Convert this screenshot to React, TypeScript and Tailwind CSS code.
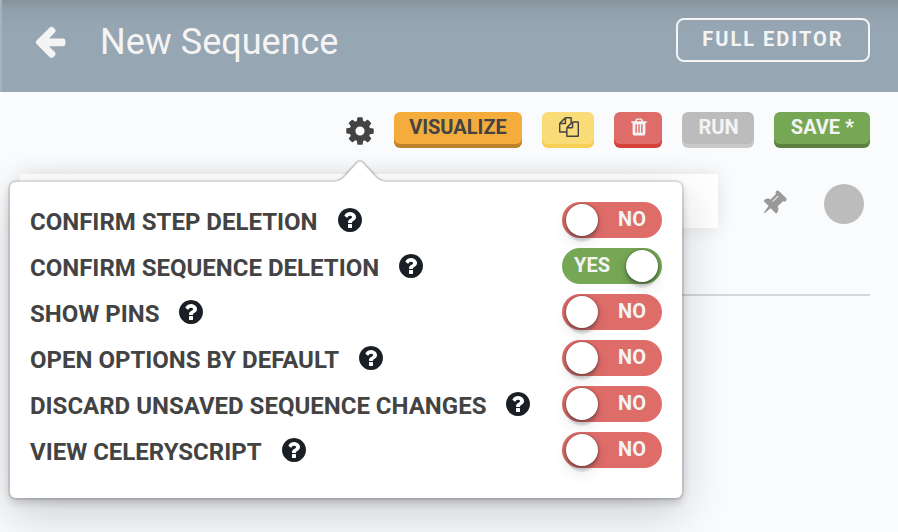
import type { ReactNode } from "react";

const paths = {
  back: "M1664 896v128q0 53-32.5 90.5t-84.5 37.5h-704l293 294q38 36 38 90t-38 90l-75 76q-37 37-90 37-52 0-91-37l-651-652q-37-37-37-90 0-52 37-91l651-650q38-38 91-38 52 0 90 38l75 74q38 38 38 91t-38 91l-293 293h704q52 0 84.5 37.5t32.5 90.5z",
  cog: "M1152 896q0-106-75-181t-181-75-181 75-75 181 75 181 181 75 181-75 75-181zm512-109v222q0 12-8 23t-20 13l-185 28q-19 54-39 91 35 50 107 138 10 12 10 25t-9 23q-27 37-99 108t-94 71q-12 0-26-9l-138-108q-44 23-91 38-16 136-29 186-7 28-36 28h-222q-14 0-24.5-8.5t-11.5-21.5l-28-184q-49-16-90-37l-141 107q-10 9-25 9-14 0-25-11-126-114-165-168-7-10-7-23 0-12 8-23 15-21 51-66.5t54-70.5q-27-50-41-99l-183-27q-13-2-21-12.5t-8-23.5v-222q0-12 8-23t19-13l186-28q14-46 39-92-40-57-107-138-10-12-10-24 0-10 9-23 26-36 98.5-107.5t94.5-71.5q13 0 26 10l138 107q44-23 91-38 16-136 29-186 7-28 36-28h222q14 0 24.5 8.5t11.5 21.5l28 184q49 16 90 37l142-107q9-9 24-9 13 0 25 10 129 119 165 170 7 8 7 22 0 12-8 23-15 21-51 66.5t-54 70.5q26 50 41 98l183 28q13 2 21 12.5t8 23.5z",
  help: "M1024 1376v-192q0-14-9-23t-23-9h-192q-14 0-23 9t-9 23v192q0 14 9 23t23 9h192q14 0 23-9t9-23zm256-672q0-88-55.5-163t-138.5-116-170-41q-243 0-371 213-15 24 8 42l132 100q7 6 19 6 16 0 25-12 53-68 86-92 34-24 86-24 48 0 85.5 26t37.5 59q0 38-20 61t-68 45q-63 28-115.5 86.5t-52.5 125.5v36q0 14 9 23t23 9h192q14 0 23-9t9-23q0-19 21.5-49.5t54.5-49.5q32-18 49-28.5t46-35 44.5-48 28-60.5 12.5-81zm384 192q0 209-103 385.5t-279.5 279.5-385.5 103-385.5-103-279.5-279.5-103-385.5 103-385.5 279.5-279.5 385.5-103 385.5 103 279.5 279.5 103 385.5z",
  trash: "M704 1376v-704q0-14-9-23t-23-9h-64q-14 0-23 9t-9 23v704q0 14 9 23t23 9h64q14 0 23-9t9-23zm256 0v-704q0-14-9-23t-23-9h-64q-14 0-23 9t-9 23v704q0 14 9 23t23 9h64q14 0 23-9t9-23zm256 0v-704q0-14-9-23t-23-9h-64q-14 0-23 9t-9 23v704q0 14 9 23t23 9h64q14 0 23-9t9-23zm-544-992h448l-48-117q-7-9-17-11h-317q-10 2-17 11zm928 32v64q0 14-9 23t-23 9h-96v948q0 83-47 143.5t-113 60.5h-832q-66 0-113-58.5t-47-141.5v-952h-96q-14 0-23-9t-9-23v-64q0-14 9-23t23-9h309l70-167q15-37 54-63t79-26h320q40 0 79 26t54 63l70 167h309q14 0 23 9t9 23z",
  copy: "M1696 384q40 0 68 28t28 68v1216q0 40-28 68t-68 28h-960q-40 0-68-28t-28-68v-288h-544q-40 0-68-28t-28-68v-672q0-40 20-88t48-76l408-408q28-28 76-48t88-20h416q40 0 68 28t28 68v328q68-40 128-40h416zm-544 213l-299 299h299v-299zm-640-384l-299 299h299v-299zm196 647l316-316v-416h-384v416q0 40-28 68t-68 28h-416v640h512v-256q0-40 20-88t48-76zm956 804v-1152h-384v416q0 40-28 68t-68 28h-416v640h896z",
  pin: "M800 864v-448q0-14-9-23t-23-9-23 9-9 23v448q0 14 9 23t23 9 23-9 9-23zm672 352q0 26-19 45t-45 19h-429l-51 483q-2 12-10.5 20.5t-20.5 8.5h-1q-27 0-32-27l-76-485h-404q-26 0-45-19t-19-45q0-123 78.5-221.5t177.5-98.5v-512q-52 0-90-38t-38-90 38-90 90-38h640q52 0 90 38t38 90-38 90-90 38v512q99 0 177.5 98.5t78.5 221.5z",
};

function Icon({ name, className }: { name: keyof typeof paths; className: string }) {
  return (
    <svg viewBox="0 0 1792 1792" fill="currentColor" className={`block shrink-0 ${className}`}>
      <path d={paths[name]} />
    </svg>
  );
}

function Button({ className, children }: { className: string; children: ReactNode }) {
  return (
    <button
      className={`flex h-8 items-center justify-center rounded-[6px] pb-0.5 text-[20px] leading-[30px] font-bold whitespace-nowrap ${className}`}
    >
      {children}
    </button>
  );
}

function Toggle({ on }: { on: boolean }) {
  return (
    <div
      className={`flex h-9 w-[100px] items-center rounded-full text-[20px] font-bold text-[#f4f4f4] ${
        on ? "bg-[#76a754] pr-1 pl-3" : "flex-row-reverse bg-[#de6c69] pr-4 pl-1"
      }`}
    >
      <span className="flex-1 pb-px leading-[33px]">
        <span className={on ? "block" : "block text-right"}>{on ? "YES" : "NO"}</span>
      </span>
      <span className="size-8 rounded-full bg-white shadow-[0_0_0_1px_rgba(16,22,26,0.12),0_2px_5px_rgba(16,22,26,0.4),0_8px_16px_rgba(16,22,26,0.08),0_7px_0_-1px_rgba(16,22,26,0.07)]" />
    </div>
  );
}

const options = [
  { label: "CONFIRM STEP DELETION", on: false },
  { label: "CONFIRM SEQUENCE DELETION", on: true },
  { label: "SHOW PINS", on: false },
  { label: "OPEN OPTIONS BY DEFAULT", on: false },
  { label: "DISCARD UNSAVED SEQUENCE CHANGES", on: false },
  { label: "VIEW CELERYSCRIPT", on: false },
];

function OptionsPopover() {
  return (
    <div className="absolute top-[182px] left-[10px] h-[316px] w-[672px] rounded-[6px] bg-white shadow-[0_0_0_2px_rgba(16,22,26,0.1),0_4px_8px_rgba(16,22,26,0.2),0_16px_48px_rgba(16,22,26,0.2)]">
      <svg
        viewBox="0 0 30 30"
        className="absolute -top-[22px] left-[320px] size-[60px] rotate-90 [clip-path:inset(0_38px_0_0)]"
      >
        <path
          fill="#10161a"
          fillOpacity="0.16"
          d="M8.11 6.302c1.015-.936 1.887-2.922 1.887-4.297v26c0-1.378-.868-3.357-1.888-4.297L.925 17.09c-1.237-1.14-1.233-3.034 0-4.17L8.11 6.302z"
        />
        <path
          fill="#fff"
          d="M8.787 7.036c1.22-1.125 2.21-3.376 2.21-5.03V0v30-2.005c0-1.654-.983-3.9-2.21-5.03l-7.183-6.616c-.81-.746-.802-1.96 0-2.7l7.183-6.614z"
        />
      </svg>
      <div className="relative flex flex-col gap-[10px] p-5">
        {options.map(({ label, on }) => (
          <div key={label} className="flex h-9 items-center">
            <span className="pt-1 text-[24px] leading-8 font-bold whitespace-nowrap">{label}</span>
            <Icon name="help" className="ml-[18px] size-7 text-[#1a1f26]" />
            <div className="ml-auto">
              <Toggle on={on} />
            </div>
          </div>
        ))}
      </div>
    </div>
  );
}

export default function App() {
  return (
    <div className="relative h-[532px] w-[898px] overflow-hidden bg-[#fafbfd] font-[Roboto,sans-serif] text-[#434343]">
      <header className="flex h-[92px] items-start border-l-2 border-[#a6b2bd] bg-[#97a6b3] bg-linear-to-b from-[#87939c] via-[#919faa] via-10% to-[#97a6b3] to-30% pr-7 pl-[30px] text-[#f4f4f4]">
        <Icon name="back" className="mt-[23px] size-9" />
        <h1 className="mt-[18px] ml-8 text-[36px] leading-[48px]">New Sequence</h1>
        <button className="mt-[18px] ml-auto h-11 w-[194px] rounded-[8px] border-2 border-[#f4f4f4] pb-0.5 text-[20px] leading-[38px] font-bold tracking-[2px]">
          FULL EDITOR
        </button>
      </header>
      <div className="flex h-[82px] items-start justify-end gap-5 pt-5 pr-7">
        <Icon name="cog" className="mt-[3px] -mr-0.5 size-8" />
        <Button className="w-32 bg-[#f4ac3d] shadow-[0_4px_0_#be832c]">VISUALIZE</Button>
        <Button className="w-[52px] bg-[#f9dc78] pl-0.5 shadow-[0_4px_0_#f8cf55]">
          <Icon name="copy" className="size-5" />
        </Button>
        <Button className="w-12 bg-[#de6c69] pl-0.5 text-[#f4f4f4] shadow-[0_4px_0_#d6403a]">
          <Icon name="trash" className="size-5" />
        </Button>
        <Button className="w-[72px] bg-[#bcbcbc] pl-px text-[#f4f4f4] shadow-[0_4px_0_#c9c9c9]">RUN</Button>
        <Button className="w-24 bg-[#76a754] pl-px text-[#f4f4f4] shadow-[0_4px_0_#5a8140]">SAVE *</Button>
      </div>
      <div className="flex items-start pr-[34px] pl-5">
        <div className="h-[54px] w-[698px] bg-white shadow-[0_0_20px_rgba(0,0,0,0.1)]" />
        <Icon name="pin" className="mt-[15px] ml-[42px] size-7 rotate-45 text-[#999999]" />
        <div className="mt-2.5 ml-auto size-10 rounded-full bg-[#bcbcbc]" />
      </div>
      <hr className="mt-[66px] mr-7 ml-5 border-t-2 border-[#d5d7d9]" />
      <OptionsPopover />
    </div>
  );
}
